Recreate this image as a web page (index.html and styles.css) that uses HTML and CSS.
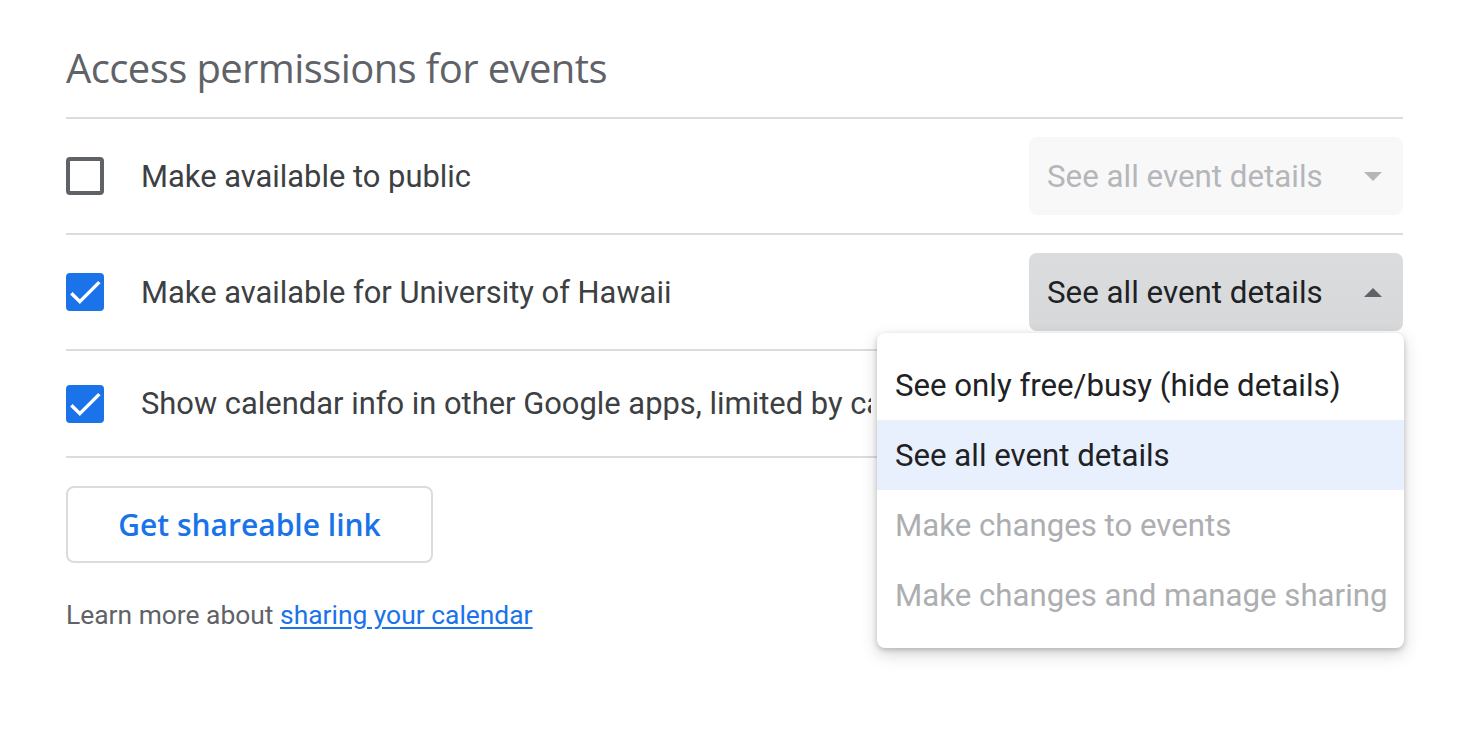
FILE: index.html
```html
<!DOCTYPE html>
<html>
<head>
<meta charset="utf-8">
<link rel="stylesheet" href="styles.css">
</head>
<body>
<div class="page">
  <h2 class="title">Access permissions for events</h2>
  <div class="rows">
    <div class="row">
      <div class="cb"></div>
      <div class="label">Make available to public</div>
      <div class="select disabled">
        <span class="sel-text">See all event details</span>
        <span class="arrow down"></span>
      </div>
    </div>
    <div class="row">
      <div class="cb checked"><svg viewBox="3 3 18 18" width="38" height="38"><path d="M9 16.17L4.83 12l-1.42 1.41L9 19 21 7l-1.41-1.41z" fill="#fff" transform="translate(12 12) scale(0.82) translate(-12 -12)"/></svg></div>
      <div class="label">Make available for University of Hawaii</div>
      <div class="select active">
        <span class="sel-text">See all event details</span>
        <span class="arrow up"></span>
      </div>
    </div>
    <div class="row short">
      <div class="cb checked"><svg viewBox="3 3 18 18" width="38" height="38"><path d="M9 16.17L4.83 12l-1.42 1.41L9 19 21 7l-1.41-1.41z" fill="#fff" transform="translate(12 12) scale(0.82) translate(-12 -12)"/></svg></div>
      <div class="label clipped">Show calendar info in other Google apps, limited by calendar settings</div>
    </div>
  </div>
  <button class="share">Get shareable link</button>
  <p class="learn">Learn more about <a href="#">sharing your calendar</a></p>

  <div class="menu">
    <div class="item">See only free/busy (hide details)</div>
    <div class="item selected">See all event details</div>
    <div class="item dim">Make changes to events</div>
    <div class="item dim">Make changes and manage sharing</div>
  </div>
</div>
</body>
</html>
```

FILE: styles.css
```css
html, body {
  margin: 0;
  padding: 0;
  background: #fff;
}
body {
  font-family: Roboto, "Liberation Sans", sans-serif;
  color: #3c4043;
  width: 1474px;
  height: 736px;
  overflow: hidden;
}
.page {
  position: relative;
  margin-left: 66px;
  width: 1337px;
}
.title {
  margin: 0;
  padding-top: 40px;
  height: 117px;
  box-sizing: border-box;
  font-family: "Open Sans", Roboto, sans-serif;
  font-weight: 400;
  font-size: 40px;
  line-height: 56px;
  color: #5f6368;
  letter-spacing: -0.6px;
}
.rows {
  border-top: 2px solid #dadce0;
}
.row {
  display: flex;
  align-items: center;
  padding: 18px 0;
  min-height: 78px;
  border-bottom: 2px solid #dadce0;
}
.row.short {
  padding: 0;
  min-height: 105px;
}
.cb {
  flex: none;
  width: 38px;
  height: 38px;
  box-sizing: border-box;
  border: 4px solid #5f6368;
  border-radius: 4px;
  display: flex;
  align-items: center;
  justify-content: center;
  overflow: hidden;
}
.cb.checked {
  background: #1a73e8;
  border: none;
}
.cb svg {
  display: block;
  flex: none;
}
.label {
  flex: 1;
  margin-left: 37px;
  font-size: 30.9px;
  color: #3c4043;
  white-space: nowrap;
  overflow: hidden;
}
.label.clipped {
  flex: none;
  width: 730px;
}
.select {
  flex: none;
  width: 374px;
  height: 78px;
  box-sizing: border-box;
  border-radius: 8px;
  padding: 0 21px 0 18px;
  display: flex;
  align-items: center;
  justify-content: space-between;
  font-size: 31.3px;
}
.select.disabled {
  background: #f8f8f9;
  color: #b4b6b9;
}
.select.active {
  background: linear-gradient(#dadcdd, #d6d8d9);
  color: #202124;
}
.arrow {
  width: 0;
  height: 0;
  border-left: 9.5px solid transparent;
  border-right: 9.5px solid transparent;
}
.arrow.down {
  border-top: 9.5px solid #b4b6b9;
}
.arrow.up {
  border-bottom: 9.5px solid #5f6368;
}
.share {
  display: block;
  margin-top: 28px;
  width: 367px;
  height: 77px;
  background: #fff;
  border: 2px solid #dadce0;
  border-radius: 8px;
  font-family: "Open Sans", Roboto, sans-serif;
  font-weight: 600;
  font-size: 30px;
  color: #1a73e8;
  padding: 0;
}
.learn {
  margin: 37px 0 0;
  font-size: 26.4px;
  color: #5f6368;
}
.learn a {
  color: #1a73e8;
  text-decoration: underline;
  text-underline-offset: 3px;
}
.menu {
  position: absolute;
  left: 811px;
  top: 333px;
  width: 527px;
  box-sizing: border-box;
  padding: 17px 0 18px;
  background: #fff;
  border-radius: 8px;
  box-shadow: 0 6px 16px rgba(60,64,67,0.22), 0 2px 5px rgba(60,64,67,0.25);
}
.item {
  height: 70px;
  display: flex;
  align-items: center;
  padding-left: 18px;
  font-size: 31.2px;
  color: #202124;
  white-space: nowrap;
}
.item.selected {
  background: #e8f0fe;
}
.item.dim {
  color: #acaeb1;
}
```
